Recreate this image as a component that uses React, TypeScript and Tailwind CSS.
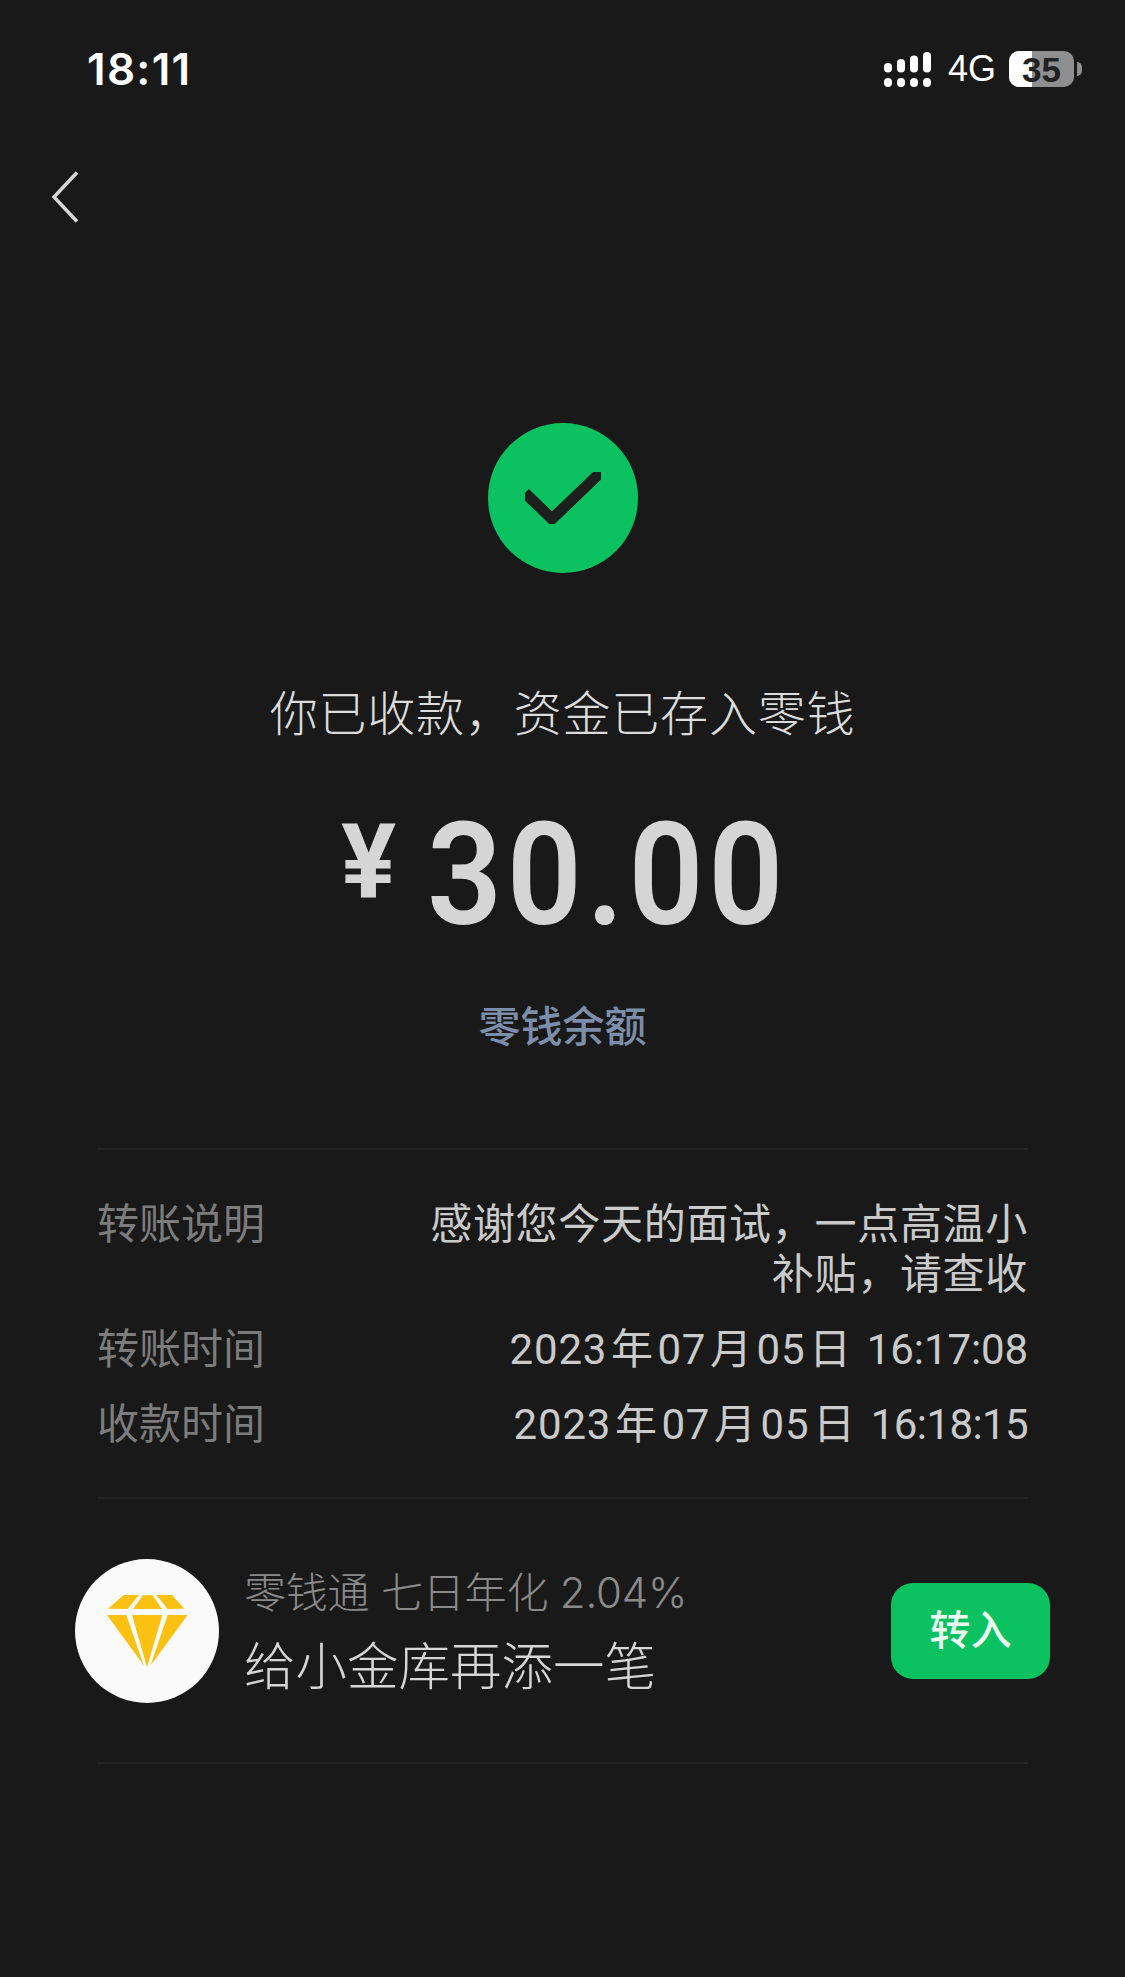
import React from 'react';

const cjk = "font-['Inter','Noto_Sans_CJK_SC',sans-serif]";

const SignalIcon = () => (
  <svg width="47" height="35" viewBox="0 0 47 35" fill="#fff">
    <rect x="0" y="11" width="8" height="9.5" rx="4" />
    <rect x="13" y="7" width="8" height="13.5" rx="4" />
    <rect x="26" y="3.5" width="8" height="17" rx="4" />
    <rect x="39" y="0" width="8" height="20.5" rx="4" />
    <rect x="0" y="26" width="8" height="9" rx="4" />
    <rect x="13" y="26" width="8" height="9" rx="4" />
    <rect x="26" y="26" width="8" height="9" rx="4" />
    <rect x="39" y="26" width="8" height="9" rx="4" />
  </svg>
);

const Battery = () => (
  <div className="flex items-center gap-[3px]">
    <div className="relative flex h-[36px] w-[65px] items-center justify-center overflow-hidden rounded-[10px] bg-[#8f8f8f]">
      <div className="absolute inset-y-0 left-0 w-[23px] bg-white" />
      <span className="relative font-['Liberation_Sans',sans-serif] text-[35px] font-bold leading-none text-[#222]">35</span>
    </div>
    <div className="h-[14px] w-[5px] rounded-r-full bg-[#8f8f8f]" />
  </div>
);

const Diamond = () => (
  <svg width="81" height="74" viewBox="140 203 243 220" fill="#fbc112">
    <path d="M143 246 190 205 236 205 201 247Z" />
    <path d="M218 247 248 206 276 206 305 247Z" />
    <path d="M322 247 288 205 335 205 372 246Z" />
    <path d="M140 265 198 265 250 416Z" />
    <path d="M215 265 306 265 260 422Z" />
    <path d="M322 265 382 265 271 416Z" />
  </svg>
);

const Row = ({ label, children, className }: { label: string; children: React.ReactNode; className?: string }) => (
  <div className={`flex items-start justify-between ${className ?? ''}`}>
    <div className="text-[#7c7c7c]">{label}</div>
    <div className="w-[600px] text-right text-[#cacaca]">{children}</div>
  </div>
);

const DateText = ({ date, time, timeClass }: { date: string; time: string; timeClass: string }) => (
  <span className="font-['Roboto','Noto_Sans_CJK_SC',sans-serif] tracking-[0.8px] [word-spacing:-7.5px]">
    {date}
    <span className={`ml-[15px] ${timeClass}`}>{time}</span>
  </span>
);

export default function App() {
  return (
    <div className={`h-[1977px] w-[1125px] overflow-hidden bg-[#191919] ${cjk}`}>
      {/* Status bar */}
      <div className="flex h-[87px] items-end justify-between pl-[87px] pr-[43px]">
        <div className="text-[44px] font-semibold leading-[36px] tracking-[1.3px] text-white">18:11</div>
        <div className="flex items-center">
          <SignalIcon />
          <span className="ml-[17px] font-['Liberation_Sans',sans-serif] text-[36px] leading-none text-white">4G</span>
          <div className="ml-[13px]">
            <Battery />
          </div>
        </div>
      </div>

      {/* Back */}
      <div className="mt-[84px] pl-[50px]">
        <svg width="30" height="52" viewBox="0 0 30 52" fill="none" stroke="#d6d6d6" strokeWidth="3.5">
          <path d="M27 1.5 4 26 27 50.5" />
        </svg>
      </div>

      {/* Result */}
      <div className="mt-[200px] flex flex-col items-center">
        <div className="flex h-[150px] w-[150px] items-center justify-center rounded-full bg-[#0bc160]">
          <svg width="76" height="52" viewBox="0 0 76 52" fill="none" stroke="#1b1f1d" strokeWidth="11" strokeLinejoin="round">
            <path d="M0 21 27 47 76 0" />
          </svg>
        </div>
        <div className="mt-[113px] text-[48px] font-light leading-[56px] tracking-[0.8px] text-[#dcdcdc]">你已收款，资金已存入零钱</div>
        <div className="mt-[68px] flex h-[130px] items-center self-start pl-[341px] font-['Roboto',sans-serif] text-[#d5d5d5]">
          <span className="mb-[28px] w-[86px] text-[103px] font-bold leading-none">¥</span>
          <span className="origin-left scale-x-[0.92] text-[143px] font-semibold leading-none tracking-[5px]">30.00</span>
        </div>
        <div className="mt-[62px] text-[42px] font-medium leading-[50px] text-[#7c8ea9]">零钱余额</div>
      </div>

      {/* Details */}
      <div className="mx-[97px] mt-[96px] border-y-2 border-[#242424] pb-[47px] pt-[49px] text-[42px] leading-[50px]">
        <Row label="转账说明">
          <span className="tracking-[0.7px]">感谢您今天的面试，一点高温小补贴，请查收</span>
        </Row>
        <Row label="转账时间" className="mt-[25px]">
          <DateText date="2023 年 07 月 05 日" time="16:17:08" timeClass="tracking-[-0.1px]" />
        </Row>
        <Row label="收款时间" className="mt-[24px]">
          <DateText date="2023 年 07 月 05 日" time="16:18:15" timeClass="tracking-[-0.6px]" />
        </Row>
      </div>

      {/* Promo */}
      <div className="flex h-[263px] items-center pl-[75px] pr-[75px]">
        <div className="flex h-[144px] w-[144px] shrink-0 items-center justify-center rounded-full bg-[#fafafa]">
          <Diamond />
        </div>
        <div className="mb-[3px] ml-[25px] flex-1">
          <div className="text-[42px] font-light leading-[50px] tracking-[-0.2px] text-[#8a8a8a]">零钱通 七日年化 2.04%</div>
          <div className="mt-[23px] text-[51.5px] font-light leading-[50px] text-[#d6d6d6]">给小金库再添一笔</div>
        </div>
        <div className="flex h-[96px] w-[159px] items-center justify-center rounded-[22px] bg-[#0bc160] text-[41px] font-medium text-[#eafaf0]">转入</div>
      </div>
      <div className="mx-[97px] border-t-2 border-[#242424]" />
    </div>
  );
}
